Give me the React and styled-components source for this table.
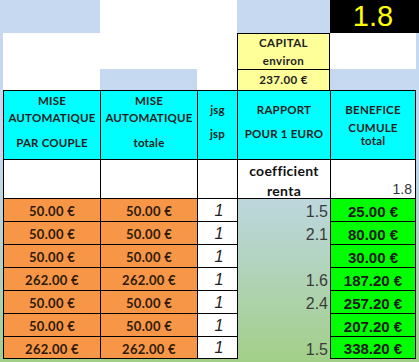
import styled, { createGlobalStyle } from 'styled-components';

const Global = createGlobalStyle`
  html, body { margin: 0; padding: 0; }
  body { width: 419px; height: 362px; overflow: hidden; background: #a2cf88; }
`;

const LINE = '1px solid #000';
const CALIBRI = "Lato, 'Open Sans', sans-serif";
const ARIAL = "'Liberation Sans', Arial, sans-serif";

const rows = [
  { a: '50.00 €', b: '50.00 €', r: '1.5', g: '25.00 €' },
  { a: '50.00 €', b: '50.00 €', r: '2.1', g: '80.00 €' },
  { a: '50.00 €', b: '50.00 €', r: '', g: '30.00 €' },
  { a: '262.00 €', b: '262.00 €', r: '1.6', g: '187.20 €' },
  { a: '50.00 €', b: '50.00 €', r: '2.4', g: '257.20 €' },
  { a: '50.00 €', b: '50.00 €', r: '', g: '207.20 €' },
  { a: '262.00 €', b: '262.00 €', r: '1.5', g: '338.20 €' },
];

export default function App() {
  return (
    <>
      <Global />
      <Sheet>
        {/* top band */}
        <Blank />
        <Blank />
        <Paper />
        <Paper />
        <Blank />
        <TopValue>1.8</TopValue>

        <Blank />
        <Paper />
        <Paper />
        <Paper />
        <Capital>
          <CapLine>CAPITAL</CapLine>
          <CapLine>environ</CapLine>
        </Capital>
        <Paper />
        <Blank />

        <Blank />
        <Paper />
        <Blank />
        <Paper />
        <Capital>
          <CapLine>237.00 €</CapLine>
        </Capital>
        <Blank />
        <Blank />

        {/* header */}
        <Blank />
        <HeadCell $pt={3}>
          <HeadLine>MISE</HeadLine>
          <HeadLine $mt={3}>AUTOMATIQUE</HeadLine>
          <HeadLine $mt={11}>PAR COUPLE</HeadLine>
        </HeadCell>
        <HeadCell $pt={3}>
          <HeadLine>MISE</HeadLine>
          <HeadLine $mt={3}>AUTOMATIQUE</HeadLine>
          <HeadLine $mt={11}>totale</HeadLine>
        </HeadCell>
        <HeadCell $pt={12}>
          <HeadLine>jsg</HeadLine>
          <HeadLine $mt={10}>jsp</HeadLine>
        </HeadCell>
        <HeadCell $pt={12}>
          <HeadLine>RAPPORT</HeadLine>
          <HeadLine $mt={10}>POUR 1 EURO</HeadLine>
        </HeadCell>
        <HeadCell $pt={12} $last>
          <HeadLine>BENEFICE</HeadLine>
          <HeadLine $mt={4}>CUMULE</HeadLine>
          <HeadLine $mt={-1}>total</HeadLine>
        </HeadCell>
        <Blank />

        {/* coefficient row */}
        <Blank />
        <WhiteCell />
        <WhiteCell />
        <WhiteCell />
        <Coef>
          <span>coefficient</span>
          <span>renta</span>
        </Coef>
        <Ratio>1.8</Ratio>
        <Blank />

        {rows.map((row, i) => {
          const last = i === rows.length - 1;
          return [
            <Blank key={`s${i}`} />,
            <Stake key={`a${i}`} $bottom={last}>{row.a}</Stake>,
            <Stake key={`b${i}`} $bottom={last}>{row.b}</Stake>,
            <One key={`o${i}`} $bottom={last}>1</One>,
            <Rapport key={`r${i}`} $first={i === 0}>{row.r}</Rapport>,
            <Gain key={`g${i}`} $bottom={last}>{row.g}</Gain>,
            <Blank key={`e${i}`} />,
          ];
        })}
      </Sheet>
    </>
  );
}

const Sheet = styled.div`
  width: 419px;
  height: 362px;
  display: grid;
  grid-template-columns: 3px 97px 97px 40px 93px 86px 3px;
  grid-template-rows: 33px 36px 21px 69px 39px repeat(7, 23px) 3px;
  background: linear-gradient(
    to bottom,
    #c6d9f1 0%,
    #c4d8ee 45%,
    #b4d4c4 70%,
    #a2cf88 100%
  );
  font-family: ${CALIBRI};
`;

const Blank = styled.div``;

const Paper = styled.div`
  background: #fff;
`;

const TopValue = styled.div`
  grid-column: span 2;
  background: #000;
  color: #ffff00;
  font-family: ${ARIAL};
  font-size: 29px;
  display: flex;
  align-items: center;
  justify-content: center;
  padding-right: 3px;
`;

const Capital = styled.div`
  background: #ffff99;
  border-left: ${LINE};
  border-right: ${LINE};
  border-top: ${LINE};
  display: flex;
  flex-direction: column;
  align-items: center;
  justify-content: center;
`;

const CapLine = styled.span`
  font-weight: 700;
  font-size: 11.5px;
  line-height: 18px;
  letter-spacing: 0.4px;
  color: #222;
`;

const HeadCell = styled.div`
  background: #00ffff;
  border-left: ${LINE};
  border-top: ${LINE};
  border-right: ${({ $last }) => ($last ? LINE : 'none')};
  display: flex;
  flex-direction: column;
  align-items: center;
  padding-top: ${({ $pt }) => $pt}px;
`;

const HeadLine = styled.span`
  margin-top: ${({ $mt }) => $mt || 0}px;
  font-weight: 700;
  font-size: 11.5px;
  line-height: 14px;
  letter-spacing: 0.2px;
  color: #222;
  white-space: nowrap;
`;

const WhiteCell = styled.div`
  background: #fff;
  border-left: ${LINE};
  border-top: ${LINE};
`;

const Coef = styled(WhiteCell)`
  display: flex;
  flex-direction: column;
  align-items: center;
  font-weight: 700;
  font-size: 14px;
  line-height: 20px;
  letter-spacing: 0.3px;
  color: #111;
  padding-top: 1px;
`;

const Ratio = styled(WhiteCell)`
  border-right: ${LINE};
  display: flex;
  align-items: flex-end;
  justify-content: flex-end;
  padding: 0 3px 1px 0;
  font-family: ${ARIAL};
  font-size: 14px;
  color: #333;
`;

const Stake = styled.div`
  background: #f79646;
  border-left: ${LINE};
  border-top: ${LINE};
  border-bottom: ${({ $bottom }) => ($bottom ? LINE : 'none')};
  display: flex;
  align-items: center;
  justify-content: center;
  padding-top: 2px;
  font-weight: 700;
  font-size: 13px;
  letter-spacing: 0.3px;
  color: #2e1a08;
`;

const One = styled.div`
  background: #fff;
  border-left: ${LINE};
  border-top: ${LINE};
  border-bottom: ${({ $bottom }) => ($bottom ? LINE : 'none')};
  display: flex;
  align-items: center;
  justify-content: center;
  padding: 1px 0 0 3px;
  font-family: ${ARIAL};
  font-style: italic;
  font-size: 16px;
  color: #222;
`;

const Rapport = styled.div`
  border-left: ${LINE};
  border-top: ${({ $first }) => ($first ? LINE : 'none')};
  display: flex;
  align-items: flex-end;
  justify-content: flex-end;
  padding-right: 2px;
  font-family: ${ARIAL};
  font-size: 16px;
  line-height: 18px;
  color: #3a3a3a;
`;

const Gain = styled.div`
  background: #00ff00;
  border-left: ${LINE};
  border-top: ${LINE};
  border-right: ${LINE};
  border-bottom: ${({ $bottom }) => ($bottom ? LINE : 'none')};
  display: flex;
  align-items: center;
  justify-content: center;
  padding-top: 2px;
  font-family: ${ARIAL};
  font-weight: 700;
  font-size: 15px;
  color: #1a1a1a;
`;
